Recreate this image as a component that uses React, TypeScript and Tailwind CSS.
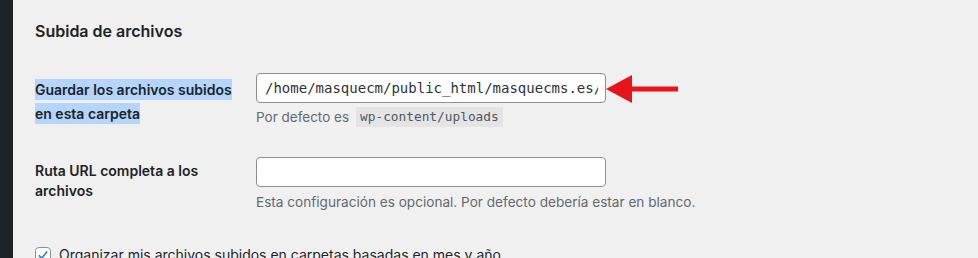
import React from "react";

export default function App() {
  const font = { fontFamily: "Inter, 'Noto Sans', sans-serif" };
  const mono = { fontFamily: "'DejaVu Sans Mono', 'Liberation Mono', monospace" };
  return (
    <div className="relative flex h-[258px] w-[978px] overflow-hidden bg-[#f0f0f1]" style={font}>
      <div className="w-[13px] shrink-0 bg-[#1d2327]" />
      <div className="flex-1 pl-[22px]">
        <h2 className="pt-[19px] text-[16px] leading-[24px] font-semibold text-[#1d2327]">Subida de archivos</h2>

        <div className="mt-[30px] flex">
          <div className="w-[221px] shrink-0 pt-[4px] pr-[20px]">
            <span className="box-decoration-clone bg-[#b4d5fc] py-[2px] text-[14px] leading-[20px] font-semibold text-[#1d2327]">
              Guardar los archivos subidos en esta carpeta
            </span>
          </div>
          <div className="flex flex-col">
            <div className="flex h-[30px] w-[350px] items-center rounded-[4px] border border-[#8c8f94] bg-white pl-[8px] pr-[7px]">
              <div className="flex-1 overflow-hidden whitespace-nowrap text-[14px] text-[#2c3338]" style={mono}>
                /home/masquecm/public_html/masquecms.es/wp-content/uploads
              </div>
            </div>
            <div className="mt-[4px] flex items-center text-[13.5px] leading-[20px] text-[#646970]">
              <span>Por defecto es</span>
              <code className="ml-[7px] bg-[#e4e4e5] px-[4px] text-[12.8px] text-[#50575e]" style={mono}>
                wp-content/uploads
              </code>
            </div>
          </div>
        </div>

        <div className="mt-[30px] flex">
          <div className="w-[221px] shrink-0 pt-[4px] pr-[20px] text-[14px] leading-[20px] font-semibold text-[#1d2327]">
            Ruta URL completa a los archivos
          </div>
          <div className="flex flex-col">
            <div className="h-[30px] w-[350px] rounded-[4px] border border-[#8c8f94] bg-white" />
            <div className="mt-[5px] text-[13.6px] leading-[20px] text-[#646970]">
              Esta configuración es opcional. Por defecto debería estar en blanco.
            </div>
          </div>
        </div>

        <div className="mt-[33px] flex items-center gap-[8px]">
          <div className="flex h-[16px] w-[16px] items-center justify-center rounded-[4px] border border-[#8c8f94] bg-white">
            <svg width="14" height="14" viewBox="0 0 20 20">
              <path d="M4 10.5 L8 14.5 L16 5" fill="none" stroke="#3582c4" strokeWidth="2.4" />
            </svg>
          </div>
          <span className="text-[14px] leading-[20px] text-[#1d2327]">
            Organizar mis archivos subidos en carpetas basadas en mes y año
          </span>
        </div>
      </div>

      <svg className="absolute left-[604px] top-[74px]" width="80" height="30" viewBox="0 0 80 30">
        <polygon points="2,15 28,1 28,29" fill="#e8141b" />
        <rect x="26" y="12.5" width="48" height="5" fill="#e8141b" />
      </svg>
    </div>
  );
}
